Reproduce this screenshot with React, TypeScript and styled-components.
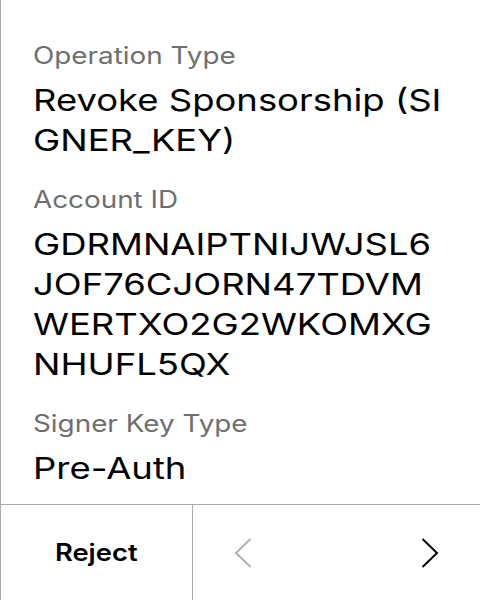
import React from "react";
import styled, { createGlobalStyle } from "styled-components";

const Global = createGlobalStyle`
  html, body { margin: 0; padding: 0; background: #fff; overflow: hidden; }
  body { font-family: Inter, "Noto Sans", sans-serif; -webkit-font-smoothing: antialiased; }
  *, *::before, *::after { box-sizing: border-box; }
`;

const Screen = styled.div`
  width: 480px;
  height: 600px;
  border-left: 1px solid #aaaaaa;
  display: flex;
  flex-direction: column;
  background: #fff;
  overflow: hidden;
`;

const Content = styled.div`
  flex: 1;
  padding: 40px 30px 0 32px;
  display: flex;
  flex-direction: column;
  gap: 24px;
`;

const Field = styled.div`
  display: flex;
  flex-direction: column;
  align-items: flex-start;
  gap: 8px;
`;

/* The device font is drawn wider than Inter: stretch it horizontally. */
const Label = styled.div`
  font-size: 24px;
  line-height: 32px;
  color: #6f6f6f;
  white-space: nowrap;
  transform: scaleX(1.16);
  transform-origin: left center;
`;

const Value = styled.div`
  width: 339px;
  font-size: 30px;
  line-height: 40px;
  color: #000;
  word-break: break-all;
  transform: scaleX(1.215);
  transform-origin: left center;
`;

const Footer = styled.div`
  height: 96px;
  flex: none;
  border-top: 1px solid #aaaaaa;
  display: flex;
`;

const RejectButton = styled.div`
  width: 192px;
  border-right: 1px solid #aaaaaa;
  display: flex;
  align-items: center;
  justify-content: center;
`;

const RejectText = styled.span`
  font-size: 24px;
  font-weight: 600;
  color: #000;
  transform: scaleX(1.14);
`;

const Nav = styled.div`
  flex: 1;
  display: flex;
  justify-content: space-between;
  align-items: center;
`;

const NavButton = styled.div<{ $disabled?: boolean }>`
  width: 100px;
  height: 100%;
  display: flex;
  align-items: center;
  justify-content: center;
  color: ${(p) => (p.$disabled ? "#b0b0b0" : "#000")};
`;

const Chevron = ({ dir }: { dir: "left" | "right" }) => (
  <svg width="18" height="30" viewBox="0 0 18 30" fill="none">
    <path
      d={dir === "left" ? "M16.5 1 L2 15 L16.5 29" : "M1.5 1 L16 15 L1.5 29"}
      stroke="currentColor"
      strokeWidth="2"
    />
  </svg>
);

const fields = [
  { label: "Operation Type", value: "Revoke Sponsorship (SIGNER_KEY)" },
  { label: "Account ID", value: "GDRMNAIPTNIJWJSL6JOF76CJORN47TDVMWERTXO2G2WKOMXGNHUFL5QX" },
  { label: "Signer Key Type", value: "Pre-Auth" },
];

export default function App() {
  return (
    <>
      <Global />
      <Screen>
        <Content>
          {fields.map((f) => (
            <Field key={f.label}>
              <Label>{f.label}</Label>
              <Value>{f.value}</Value>
            </Field>
          ))}
        </Content>
        <Footer>
          <RejectButton>
            <RejectText>Reject</RejectText>
          </RejectButton>
          <Nav>
            <NavButton $disabled>
              <Chevron dir="left" />
            </NavButton>
            <NavButton>
              <Chevron dir="right" />
            </NavButton>
          </Nav>
        </Footer>
      </Screen>
    </>
  );
}
